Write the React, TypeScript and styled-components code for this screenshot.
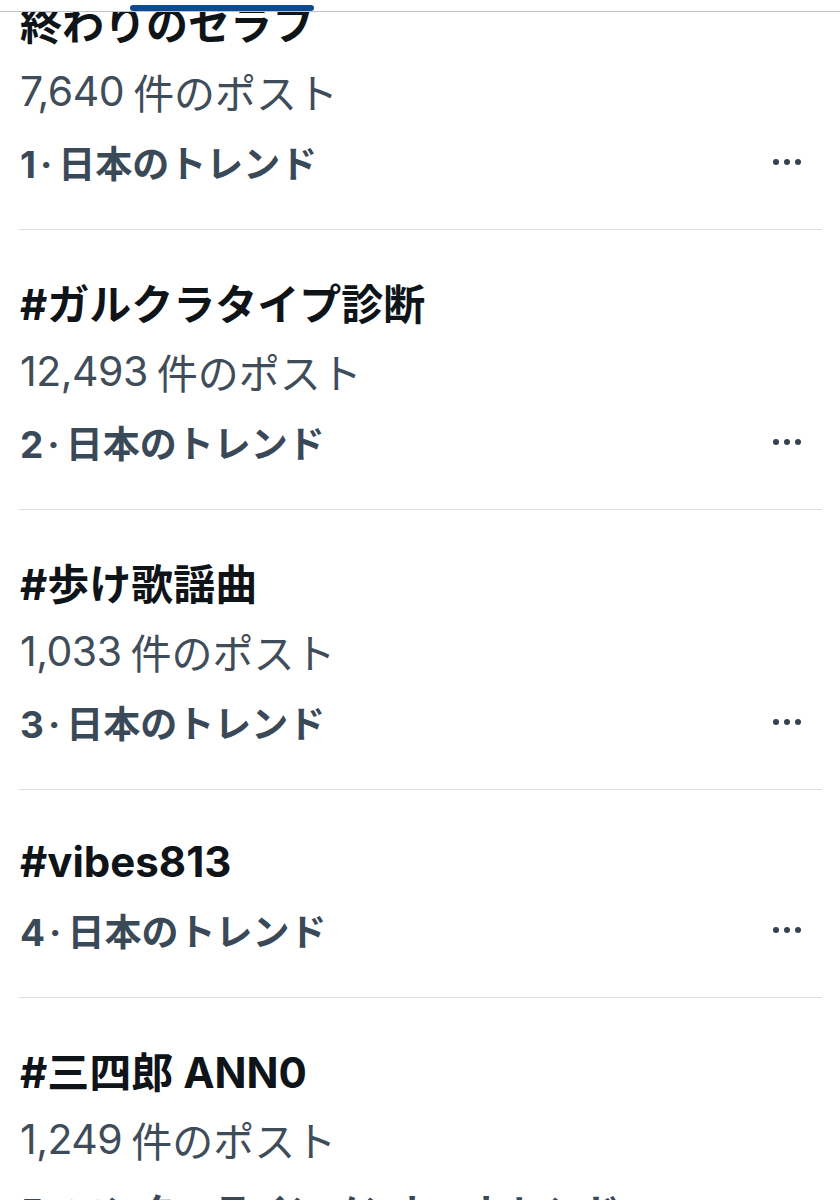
import React, { FC } from 'react';
import styled, { createGlobalStyle } from 'styled-components';

const GlobalStyle = createGlobalStyle`
  html, body {
    margin: 0;
    padding: 0;
    background: #fff;
  }
  body {
    font-family: Inter, 'Noto Sans CJK JP', sans-serif;
    -webkit-font-smoothing: antialiased;
  }
`;

type Trend = {
  title: string;
  posts?: string;
  rank: number;
  label: string;
};

const TRENDS: Trend[] = [
  { title: '終わりのセラフ', posts: '7,640', rank: 1, label: '日本のトレンド' },
  { title: '#ガルクラタイプ診断', posts: '12,493', rank: 2, label: '日本のトレンド' },
  { title: '#歩け歌謡曲', posts: '1,033', rank: 3, label: '日本のトレンド' },
  { title: '#vibes813', rank: 4, label: '日本のトレンド' },
  { title: '#三四郎 ANN0', posts: '1,249', rank: 5, label: 'エンターテインメント・トレンド' },
];

const Page = styled.div`
  width: 840px;
  height: 1200px;
  overflow: hidden;
  position: relative;
  background: #fff;
`;

// sticky tab bar, mostly scrolled away — only its bottom edge shows
const TabBar = styled.div`
  position: absolute;
  top: 0;
  left: 0;
  right: 0;
  height: 11px;
  background: #fff;
  border-bottom: 1px solid #bfc3c8;
  z-index: 2;
`;

const TabIndicator = styled.div`
  position: absolute;
  left: 130px;
  bottom: 0;
  width: 184px;
  height: 6px;
  border-radius: 3px;
  background: #0d4a94;
`;

const List = styled.ul`
  list-style: none;
  margin: -50px 0 0;
  padding: 0;
`;

const Row = styled.li`
  margin: 0 18px 0 19px;
  padding: 37px 0 32px 1px;
  border-bottom: 1px solid #dcdee0;
`;

const Title = styled.div`
  height: 68px;
  display: flex;
  align-items: center;
  font-size: 42px;
  font-weight: 700;
  color: #0f1419;
  white-space: nowrap;
`;

const Posts = styled.div`
  height: 72px;
  display: flex;
  align-items: center;
  font-size: 41px;
  font-weight: 400;
  color: #3f4d5b;
  white-space: nowrap;
`;

const Count = styled.span`
  margin-right: 9px;
  letter-spacing: -0.5px;
`;

const RankLine = styled.div`
  height: 70px;
  display: flex;
  align-items: center;
  justify-content: space-between;
`;

const Rank = styled.span`
  font-size: 37px;
  font-weight: 700;
  color: #3a4957;
  white-space: nowrap;
`;

const Sep = styled.span`
  margin: 0 6px 0 4px;
`;

const More = styled.span`
  display: flex;
  gap: 5px;
  margin-right: 21px;
`;

const Dot = styled.span`
  width: 6px;
  height: 6px;
  border-radius: 50%;
  background: #35414c;
`;

const TrendRow: FC<{ trend: Trend }> = ({ trend }) => (
  <Row>
    <Title>{trend.title}</Title>
    {trend.posts && (
      <Posts>
        <Count>{trend.posts}</Count>件のポスト
      </Posts>
    )}
    <RankLine>
      <Rank>
        {trend.rank}
        <Sep>·</Sep>
        {trend.label}
      </Rank>
      <More>
        <Dot />
        <Dot />
        <Dot />
      </More>
    </RankLine>
  </Row>
);

const App: FC = () => {
  return (
    <Page>
      <GlobalStyle />
      <TabBar>
        <TabIndicator />
      </TabBar>
      <List>
        {TRENDS.map((t) => (
          <TrendRow key={t.rank} trend={t} />
        ))}
      </List>
    </Page>
  );
};

export default App;
